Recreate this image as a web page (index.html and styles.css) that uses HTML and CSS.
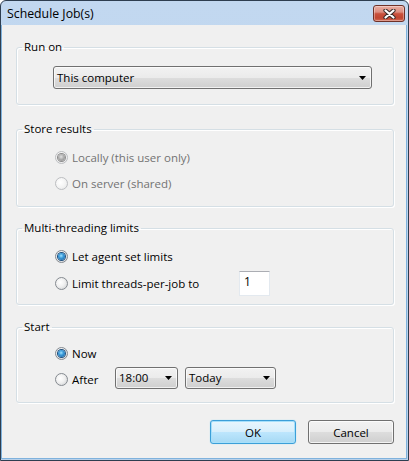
FILE: index.html
```html
<!DOCTYPE html>
<html>
<head>
<meta charset="utf-8">
<title>Schedule Job(s)</title>
<link rel="stylesheet" href="styles.css">
</head>
<body>
<div class="window">
  <div class="titlebar">
    <span class="title">Schedule Job(s)</span>
    <button class="close" aria-label="Close">
      <svg width="13" height="10" viewBox="0 0 13 10">
        <path d="M2.5 1.5 L10.5 8.5 M10.5 1.5 L2.5 8.5" stroke="#3a2a28" stroke-width="4.2" stroke-linecap="round" fill="none"/>
        <path d="M2.5 1.5 L10.5 8.5 M10.5 1.5 L2.5 8.5" stroke="#ffffff" stroke-width="2.2" stroke-linecap="round" fill="none"/>
      </svg>
    </button>
  </div>
  <div class="client">
    <fieldset class="group g-run">
      <legend>Run on</legend>
      <div class="gbody">
        <div class="combo combo-wide"><span class="combo-text">This computer</span><svg class="arrow" width="7" height="4" viewBox="0 0 7 4"><path d="M0 0H7L3.5 4Z" fill="#000"/></svg></div>
      </div>
    </fieldset>

    <fieldset class="group g-store">
      <legend>Store results</legend>
      <div class="gbody">
        <div class="row disabled"><span class="radio checked"></span><span class="label">Locally (this user only)</span></div>
        <div class="row disabled"><span class="radio"></span><span class="label">On server (shared)</span></div>
      </div>
    </fieldset>

    <fieldset class="group g-multi">
      <legend>Multi-threading limits</legend>
      <div class="gbody">
        <div class="row"><span class="radio checked"></span><span class="label">Let agent set limits</span></div>
        <div class="row row-tall">
          <div class="opt opt-limit"><span class="radio"></span><span class="label">Limit threads-per-job to</span></div>
          <div class="textbox">1</div>
        </div>
      </div>
    </fieldset>

    <fieldset class="group g-start">
      <legend>Start</legend>
      <div class="gbody">
        <div class="row"><span class="radio checked"></span><span class="label">Now</span></div>
        <div class="row row-combo">
          <div class="opt opt-after"><span class="radio"></span><span class="label">After</span></div>
          <div class="combo combo-time"><span class="combo-text">18:00</span><svg class="arrow" width="7" height="4" viewBox="0 0 7 4"><path d="M0 0H7L3.5 4Z" fill="#000"/></svg></div>
          <div class="combo combo-day"><span class="combo-text">Today</span><svg class="arrow" width="7" height="4" viewBox="0 0 7 4"><path d="M0 0H7L3.5 4Z" fill="#000"/></svg></div>
        </div>
      </div>
    </fieldset>

    <div class="buttons">
      <button class="btn btn-default">OK</button>
      <button class="btn">Cancel</button>
    </div>
  </div>
</div>
</body>
</html>
```

FILE: styles.css
```css
* { box-sizing: border-box; }
html, body { margin: 0; padding: 0; }
body {
  font-family: "Open Sans", "Noto Sans", sans-serif;
  font-size: 11.5px;
  color: #000;
  background: #ffffff;
}

.window {
  width: 409px;
  height: 461px;
  border: 1px solid #2e3e50;
  border-radius: 6px 6px 0 0;
  background: linear-gradient(#c2d8f0, #b9d1ea);
  display: flex;
  flex-direction: column;
  overflow: hidden;
}

.titlebar {
  height: 24px;
  flex: none;
  display: flex;
  align-items: flex-start;
  justify-content: space-between;
  padding: 0 3px 0 6px;
}
.title {
  line-height: 26px;
  font-size: 12.3px;
}
.close {
  margin-top: 4px;
  width: 32px;
  height: 17px;
  padding: 0;
  border: 1px solid #6f3128;
  border-radius: 3px;
  background: linear-gradient(#e9ada2 0%, #dc8e80 40%, #c9503c 52%, #c04631 80%, #d26a55 100%);
  box-shadow: inset 0 0 0 1px rgba(255, 255, 255, 0.35);
  display: flex;
  align-items: center;
  justify-content: center;
}

.client {
  flex: 1;
  margin: 0 1px 1px 0;
  border: 1px solid #7fb2dd;
  border-top: none;
  background: #f0f0f0;
  padding: 0 12px 0 14px;
  display: flex;
  flex-direction: column;
}

.group {
  margin: 0;
  padding: 0;
  min-width: 0;
  border: 1px solid #d5dfe5;
  border-radius: 3px;
  box-shadow: inset 1px 1px 0 #ffffff, 1px 1px 0 #ffffff;
}
.group legend {
  margin-left: 5px;
  padding: 0 2px;
  line-height: 16px;
  font-size: 11.5px;
}
.gbody {
  display: flex;
  flex-direction: column;
  padding-left: 38px;
}

.g-run { margin-top: 14px; }
.g-run .gbody { padding: 11px 0 15px 36px; }

.g-store { margin-top: 16px; }
.g-store .gbody { padding-top: 10px; padding-bottom: 13px; gap: 6px; }

.g-multi { margin-top: 13px; }
.g-multi .gbody { padding-top: 10px; padding-bottom: 8px; gap: 5px; }

.g-start { margin-top: 14px; }
.g-start .gbody { padding-top: 8px; padding-bottom: 13px; gap: 3px; }

.row {
  display: flex;
  align-items: center;
  gap: 4px;
  height: 20px;
}
.row-tall { height: 25px; gap: 0; }
.row-combo { height: 23px; gap: 0; }
.opt {
  display: flex;
  align-items: center;
  gap: 4px;
}
.opt-limit { width: 184px; }
.opt-after { width: 60px; padding-top: 4px; }

.label { white-space: nowrap; }
.disabled .label { color: #737373; }

.radio {
  flex: none;
  width: 13px;
  height: 13px;
  border-radius: 50%;
  border: 1px solid #858a90;
  background: radial-gradient(circle at 40% 40%, #ffffff 0%, #f0f0f0 45%, #c9cbcf 100%);
  display: flex;
  align-items: center;
  justify-content: center;
}
.radio.checked::after {
  content: "";
  width: 7px;
  height: 7px;
  border-radius: 50%;
  background: radial-gradient(circle at 45% 40%, #9fe2ff 0%, #3b9ad8 40%, #13599a 100%);
  box-shadow: 0 0 0 1px #1d4f7d;
}
.disabled .radio {
  border-color: #bcbec1;
  background: radial-gradient(circle at 40% 40%, #ffffff 0%, #f4f4f4 50%, #e2e3e4 100%);
}
.disabled .radio.checked::after {
  background: radial-gradient(circle at 45% 40%, #e2e2e2 0%, #a9a9a9 50%, #8a8a8a 100%);
  box-shadow: 0 0 0 1px #8c8c8c;
}

.textbox {
  width: 31px;
  height: 25px;
  background: #ffffff;
  border: 1px solid #e3e9ef;
  border-top-color: #abadb3;
  padding: 2px 4px;
  line-height: 16px;
  font-size: 12px;
}

.combo {
  display: flex;
  align-items: center;
  justify-content: space-between;
  height: 23px;
  border: 1px solid #707070;
  border-radius: 3px;
  background: linear-gradient(#f2f2f2 0%, #ebebeb 50%, #dddddd 51%, #cfcfcf 100%);
  box-shadow: inset 0 0 0 1px rgba(255, 255, 255, 0.7);
  padding: 0 5px 0 3px;
  font-size: 11.5px;
}
.combo-wide { width: 319px; }
.combo-time { width: 63px; height: 22px; }
.combo-day { width: 91px; height: 22px; margin-left: 7px; }
.arrow { flex: none; }

.buttons {
  display: flex;
  justify-content: flex-end;
  gap: 12px;
  margin-top: 17px;
}
.btn {
  width: 86px;
  height: 24px;
  padding: 0;
  font-family: inherit;
  font-size: 11.5px;
  color: #000;
  border: 1px solid #707070;
  border-radius: 3px;
  background: linear-gradient(#f2f2f2 0%, #ebebeb 50%, #dddddd 51%, #cfcfcf 100%);
  box-shadow: inset 0 0 0 1px rgba(255, 255, 255, 0.75);
}
.btn-default {
  border-color: #3c9fd8;
  background: linear-gradient(#e8f6fd 0%, #d7effc 50%, #bde6fd 51%, #a6d9f4 100%);
  box-shadow: inset 0 0 0 1px #a6e0fb, 0 0 1px #7fd0f5;
}
```
